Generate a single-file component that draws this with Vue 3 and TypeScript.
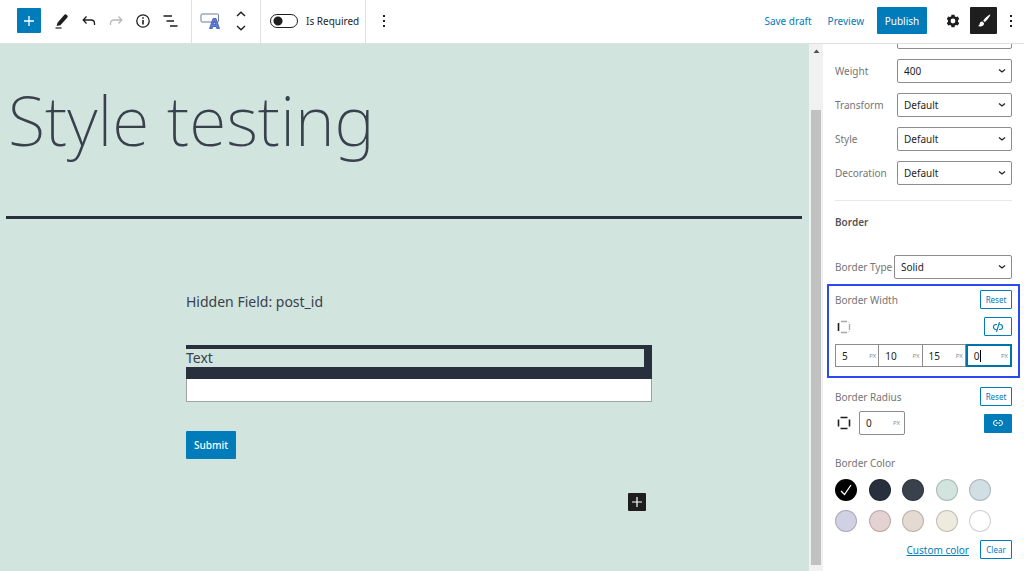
<script setup lang="ts">
import { ref } from 'vue'

interface SelectRow {
  id: string
  label: string
  value: string
}

const typography: SelectRow[] = [
  { id: 'weight', label: 'Weight', value: '400' },
  { id: 'transform', label: 'Transform', value: 'Default' },
  { id: 'style', label: 'Style', value: 'Default' },
  { id: 'decoration', label: 'Decoration', value: 'Default' },
]

const sides = ref([
  { id: 'top', value: '5' },
  { id: 'right', value: '10' },
  { id: 'bottom', value: '15' },
  { id: 'left', value: '0' },
])
const activeSide = ref('left')
const radius = ref('0')
const required = ref(false)

const colors = [
  { name: 'Black', hex: '#000000' },
  { name: 'Dark gray', hex: '#28303d' },
  { name: 'Gray', hex: '#39414d' },
  { name: 'Green', hex: '#d1e4dd' },
  { name: 'Blue', hex: '#d1dfe4' },
  { name: 'Purple', hex: '#d1d1e4' },
  { name: 'Red', hex: '#e4d1d1' },
  { name: 'Orange', hex: '#e4dad1' },
  { name: 'Yellow', hex: '#eeeadd' },
  { name: 'White', hex: '#ffffff' },
]
const selected = ref('Black')
</script>

<template>
  <div class="editor">
    <header class="topbar">
      <div class="group tools">
        <button class="inserter" aria-label="Add block">
          <svg width="12" height="12" viewBox="0 0 12 12"><path d="M6 1v10M1 6h10" stroke="#fff" stroke-width="1.3" /></svg>
        </button>
        <button class="icon" aria-label="Edit">
          <svg width="16" height="18" viewBox="0 0 16 18"><path d="M3.500 10.700 10.400 2.700a1.300 1.300 0 0 1 1.900-.1l1 .9a1.300 1.300 0 0 1 .1 1.900L6.400 13.200 2.600 14z" fill="#1e1e1e" /><path d="M1.500 16h6" stroke="#1e1e1e" stroke-width="1.2" /></svg>
        </button>
        <button class="icon" aria-label="Undo">
          <svg width="16" height="18" viewBox="0 0 16 18"><path d="M5.500 4.500 2.200 8l3.300 3.500M2.500 8h7.500q3.500 0 3.500 3.500V13" fill="none" stroke="#1e1e1e" stroke-width="1.3" /></svg>
        </button>
        <button class="icon" aria-label="Redo">
          <svg width="16" height="18" viewBox="0 0 16 18"><path d="M10.500 4.500 13.800 8l-3.300 3.500M13.500 8H6Q2.500 8 2.500 11.500V13" fill="none" stroke="#b8b8b8" stroke-width="1.3" /></svg>
        </button>
        <button class="icon" aria-label="Details">
          <svg width="16" height="16" viewBox="0 0 16 16"><circle cx="8" cy="8" r="6.200" fill="none" stroke="#1e1e1e" stroke-width="1.3" /><path d="M8 7v4.500M8 4.300v1.500" stroke="#1e1e1e" stroke-width="1.6" /></svg>
        </button>
        <button class="icon" aria-label="List view">
          <svg width="16" height="16" viewBox="0 0 16 16"><path d="M1.500 3H10M4.500 8H12M8 13h7.500" stroke="#1e1e1e" stroke-width="1.3" /></svg>
        </button>
      </div>
      <div class="group block-tools">
        <button class="icon" aria-label="Text field">
          <svg width="20" height="18" viewBox="0 0 20 18"><rect x="1" y="2" width="17.500" height="8" rx="1" fill="#fff" stroke="#6d7c95" /><path d="M9.500 16.500 13 6.500h3l3.500 10h-2.800l-.6-2h-3.200l-.6 2zM13.400 12.500h2.200l-1.100-3.300z" fill="#5c7fe0" stroke="#31479a" stroke-width=".7" /></svg>
        </button>
        <div class="movers">
          <button class="icon" aria-label="Move up">
            <svg width="10" height="6" viewBox="0 0 10 6"><path d="M1 5 5 1.300 9 5" fill="none" stroke="#1e1e1e" stroke-width="1.4" /></svg>
          </button>
          <button class="icon" aria-label="Move down">
            <svg width="10" height="6" viewBox="0 0 10 6"><path d="M1 1 5 4.700 9 1" fill="none" stroke="#1e1e1e" stroke-width="1.4" /></svg>
          </button>
        </div>
      </div>
      <div class="group toggle-group">
        <label class="toggle"><input v-model="required" type="checkbox" role="switch" />Is Required</label>
      </div>
      <div class="group more-group">
        <button class="icon" aria-label="Options">
          <svg width="4" height="16" viewBox="0 0 4 16"><path d="M1 2h2v2H1zM1 7h2v2H1zM1 12h2v2H1z" fill="#1e1e1e" /></svg>
        </button>
      </div>
      <div class="actions">
        <button class="text-button">Save draft</button>
        <button class="text-button">Preview</button>
        <button class="publish">Publish</button>
        <button class="icon gear" aria-label="Settings">
          <svg width="14" height="14" viewBox="0 0 14 14"><path fill-rule="evenodd" d="M5.500.8h3l.4 1.600 1.200.7 1.700-.5 1.400 2.500-1.200 1.200v1.400l1.200 1.200-1.400 2.500-1.700-.5-1.200.7-.4 1.600h-3l-.4-1.600-1.200-.7-1.700.5L.8 8.900 2 7.700V6.300L.8 5.100l1.400-2.500 1.700.5 1.200-.7zM7 4.600a2.400 2.400 0 1 0 0 4.800 2.400 2.400 0 0 0 0-4.800z" fill="#1e1e1e" /></svg>
        </button>
        <button class="styles" aria-label="Styles">
          <svg width="16" height="16" viewBox="0 0 16 16"><path d="M14.200 1.600c-.6-.4-4.600 2.900-7 6l1.700 1.700C11.700 6.600 14.900 2.200 14.200 1.600zM6.500 8.500c-1.500-.2-2.500.7-2.800 2.200-.2 1.200-.8 1.900-1.900 2.300 2.800 1.100 6.200.2 6.300-2.800z" fill="#fff" /></svg>
        </button>
        <button class="icon" aria-label="More">
          <svg width="4" height="16" viewBox="0 0 4 16"><path d="M1 2h2v2H1zM1 7h2v2H1zM1 12h2v2H1z" fill="#1e1e1e" /></svg>
        </button>
      </div>
    </header>

    <div class="workspace">
      <main class="canvas">
        <h1>Style testing</h1>
        <form class="form" @submit.prevent>
          <p class="hidden-field">Hidden Field: post_id</p>
          <label class="field-label" for="text-field">Text</label>
          <input id="text-field" class="field" type="text" />
          <button class="submit" type="submit">Submit</button>
          <button class="append" type="button" aria-label="Append block">
            <svg width="10" height="10" viewBox="0 0 10 10"><path d="M5 0v10M0 5h10" stroke="#fff" stroke-width="1.200" /></svg>
          </button>
        </form>
      </main>

      <div class="scrollbar" aria-hidden="true">
        <svg width="12" height="14" viewBox="0 0 12 14"><path d="M2.500 9 5.500 5.500l3 3.500z" fill="#505050" /></svg>
        <div class="thumb"></div>
      </div>

      <aside class="sidebar">
        <div class="panel">
          <div class="row">
            <select class="wide" aria-label="Size"><option></option></select>
          </div>
          <div v-for="row in typography" :key="row.id" class="row">
            <label :for="row.id">{{ row.label }}</label>
            <select :id="row.id" class="wide"><option>{{ row.value }}</option></select>
          </div>
        </div>

        <section class="border-panel">
          <h2>Border</h2>
          <div class="row">
            <label for="border-type">Border Type</label>
            <select id="border-type"><option>Solid</option></select>
          </div>

          <fieldset class="width-box">
            <div class="row heading">
              <span>Border Width</span>
              <button class="outline">Reset</button>
            </div>
            <div class="row link-row">
              <svg class="box-icon" width="14" height="14" viewBox="0 0 14 14"><path d="M4 1.500h6M4 12.500h6M12.500 4v6" stroke="#a8a8a8" stroke-width="1.300" /><path d="M2.200 2.200 3 1.500M11 1.500l1.500 1.500M11 12.500l1.500-1.500M3 12.500l-.8-.8" stroke="#ccc" /><path d="M1.500 3v8" stroke="#1e1e1e" stroke-width="1.600" /></svg>
              <button class="outline link" aria-label="Link sides">
                <svg width="12" height="10" viewBox="0 0 12 10"><path d="M5 2.500H4a2.500 2.500 0 0 0 0 5h.5M7 7.500h1a2.500 2.500 0 0 0 0-5h-.5M7.500 0 4.500 10" fill="none" stroke="#007cba" stroke-width="1.100" /></svg>
              </button>
            </div>
            <div class="sides">
              <label v-for="side in sides" :key="side.id" class="unit" :class="{ active: side.id === activeSide }">
                <input v-model="side.value" type="text" :aria-label="'Border width ' + side.id" />
                <span>PX</span>
                <i v-if="side.id === activeSide" class="caret"></i>
              </label>
            </div>
          </fieldset>

          <div class="row heading">
            <span>Border Radius</span>
            <button class="outline">Reset</button>
          </div>
          <div class="row radius-row">
            <svg class="box-icon" width="14" height="14" viewBox="0 0 14 14"><path d="M3.500 1.500h7M3.500 12.500h7M1.500 3.500v7M12.500 3.500v7" stroke="#1e1e1e" stroke-width="1.600" /></svg>
            <label class="unit single">
              <input v-model="radius" type="text" aria-label="Border radius" />
              <span>PX</span>
            </label>
            <button class="link solid" aria-label="Unlink corners">
              <svg width="12" height="10" viewBox="0 0 12 10"><path d="M5 2.500H4a2.500 2.500 0 0 0 0 5h1M7 2.500h1a2.500 2.500 0 0 1 0 5H7M4 5h4" fill="none" stroke="#fff" stroke-width="1" /></svg>
            </button>
          </div>

          <div class="color-label">Border Color</div>
          <div class="swatches">
            <button
              v-for="color in colors"
              :key="color.name"
              class="swatch"
              :style="{ backgroundColor: color.hex }"
              :aria-label="color.name"
              @click="selected = color.name"
            >
              <svg v-if="selected === color.name" width="14" height="14" viewBox="0 0 14 14"><path d="M2 8 5.500 11.500 12 2" fill="none" stroke="#fff" stroke-width="1.300" /></svg>
            </button>
          </div>
          <div class="row footer">
            <a href="#">Custom color</a>
            <button class="outline">Clear</button>
          </div>
        </section>
      </aside>
    </div>
  </div>
</template>

<style>
body {
  margin: 0;
}
</style>

<style scoped>
.editor {
  display: flex;
  flex-direction: column;
  height: 100vh;
  overflow: hidden;
  background: #fff;
  color: #1e1e1e;
  font-family: "Noto Sans", "Open Sans", sans-serif;
  font-size: 10px;
  line-height: 14px;
}
.editor * {
  box-sizing: border-box;
}
button,
input,
select {
  margin: 0;
  padding: 0;
  border: 0;
  font: inherit;
  color: inherit;
}
button {
  display: inline-flex;
  align-items: center;
  justify-content: center;
  background: none;
  border-radius: 1px;
  cursor: pointer;
}
svg {
  display: block;
  flex: none;
}

.topbar {
  display: flex;
  flex: none;
  height: 44px;
  border-bottom: 1px solid #e0e0e0;
}
.group {
  display: flex;
  align-items: center;
  padding-bottom: 2px;
  border-right: 1px solid #e0e0e0;
}
.tools {
  gap: 11px;
  width: 192px;
  padding-left: 17px;
}
.inserter {
  width: 24px;
  height: 25px;
  margin-right: 2px;
  background: #007cba;
}
.block-tools {
  gap: 16px;
  width: 69px;
  padding-left: 8px;
}
.movers {
  display: flex;
  flex-direction: column;
  gap: 8px;
}
.toggle-group {
  width: 105px;
  padding-left: 9px;
}
.toggle {
  display: flex;
  align-items: center;
  gap: 8px;
  white-space: nowrap;
}
.toggle input {
  appearance: none;
  width: 28px;
  height: 14px;
  border: 1px solid #1e1e1e;
  border-radius: 7px;
  background: radial-gradient(circle at 7px 6px, #1e1e1e 4px, #fff 5px);
}
.more-group {
  padding-left: 16px;
  border-right: 0;
}
.actions {
  display: flex;
  align-items: center;
  margin-left: auto;
  padding: 0 11px 2px 0;
}
.text-button {
  margin-right: 16px;
  color: #007cba;
}
.text-button + .publish {
  margin-left: -3px;
}
.publish {
  width: 50px;
  height: 27px;
  color: #fff;
  background: #007cba;
}
.gear {
  margin: 0 10px 0 19px;
}
.styles {
  width: 27px;
  height: 27px;
  margin-right: 12px;
  background: #1e1e1e;
}

.workspace {
  display: flex;
  flex: 1;
  min-height: 0;
}
.canvas {
  flex: 1;
  min-width: 0;
  padding: 23px 7px 0 6px;
  background: #d1e4dd;
  color: #39414d;
}
h1 {
  height: 152px;
  margin: 0;
  padding-left: 2px;
  border-bottom: 3px solid #28303d;
  font-size: 68px;
  font-weight: 200;
  line-height: 106px;
  white-space: nowrap;
}
.form {
  display: flex;
  flex-direction: column;
  padding: 72px 150px 0 180px;
}
.hidden-field {
  margin: 0 0 32px;
  font-size: 14px;
  line-height: 22px;
}
.field-label {
  border: solid #28303d;
  border-width: 4px 8px 12px 0;
  font-size: 14px;
  line-height: 18px;
}
.field {
  height: 23px;
  padding: 0 6px;
  border: 1px solid #9aa5a2;
  border-top: 0;
  background: #fff;
}
.submit {
  align-self: flex-start;
  width: 50px;
  height: 28px;
  margin-top: 29px;
  background: #007cba;
  color: #fff;
  font-weight: 500;
}
.append {
  align-self: flex-end;
  width: 18px;
  height: 18px;
  margin: 34px 6px 0 0;
  background: #1e1e1e;
}

.scrollbar {
  display: flex;
  flex: none;
  flex-direction: column;
  width: 14px;
  padding: 0 2px 6px;
  background: #f1f1f1;
}
.thumb {
  flex: 1;
  margin-top: 52px;
  background: #c1c1c1;
}

.sidebar {
  flex: none;
  width: 201px;
  padding: 0 12px;
  overflow: hidden;
  color: #757575;
}
.panel {
  display: flex;
  flex-direction: column;
  gap: 10px;
  margin-top: -19px;
  padding-bottom: 15px;
  border-bottom: 1px solid #e8e8e8;
}
.row {
  display: flex;
  align-items: center;
  justify-content: space-between;
  white-space: nowrap;
}
select {
  appearance: none;
  flex: none;
  width: 118px;
  height: 24px;
  padding: 0 20px 0 6px;
  border: 1px solid #8c8c8c;
  border-radius: 2px;
  color: #1e1e1e;
  background: #fff url("data:image/svg+xml,%3Csvg xmlns='http://www.w3.org/2000/svg' width='8' height='6'%3E%3Cpath d='M1 1.500l3 2.500 3-2.500' fill='none' stroke='%231e1e1e' stroke-width='1.200'/%3E%3C/svg%3E") no-repeat right 5px center;
}
.wide {
  width: 115px;
  margin-left: auto;
}
h2 {
  margin: 14px 0 26px;
  font-size: 10px;
  font-weight: 600;
  line-height: 14px;
  color: #555;
}
.width-box {
  min-width: 0;
  margin: 5px -8px 9px;
  padding: 4px 6px 9px;
  border: 2px solid #2b4bf2;
}
.outline {
  width: 32px;
  height: 19px;
  border: 1px solid #007cba;
  color: #007cba;
  background: #fff;
  font-size: 8px;
}
.link {
  width: 28px;
  height: 19px;
}
.solid {
  margin-left: auto;
  background: #007cba;
}
.box-icon {
  margin-left: 2px;
}
.link-row {
  margin: 8px 0;
}
.sides {
  display: flex;
}
.unit {
  position: relative;
  display: flex;
  flex: 1;
  align-items: center;
  height: 23px;
  padding: 0 2px 0 6px;
  border: 1px solid #8c8c8c;
  border-left-width: 0;
}
.unit:first-child,
.single {
  border-left-width: 1px;
}
.unit input {
  flex: 1;
  width: 0;
  min-width: 0;
  background: none;
  color: #1e1e1e;
  outline: none;
}
.unit span {
  font-size: 6px;
  color: #8c8c8c;
}
.unit.active {
  border: 2px solid #0073aa;
}
.caret {
  position: absolute;
  top: 4px;
  left: 12px;
  width: 1px;
  height: 12px;
  background: #000;
}
.single {
  flex: none;
  width: 46px;
  height: 24px;
  margin-left: 8px;
  padding-right: 4px;
  border-radius: 2px;
}
.radius-row {
  justify-content: flex-start;
  margin-top: 5px;
}
.color-label {
  margin: 21px 0 9px;
}
.swatches {
  display: grid;
  grid-template-columns: repeat(5, 22px);
  justify-content: space-between;
  row-gap: 9px;
  max-width: 156px;
}
.swatch {
  width: 22px;
  height: 22px;
  border: 1px solid rgba(0, 0, 0, 0.18);
  border-radius: 50%;
}
.footer {
  justify-content: flex-end;
  gap: 11px;
  margin-top: 8px;
}
.footer a {
  color: #007cba;
}
</style>
